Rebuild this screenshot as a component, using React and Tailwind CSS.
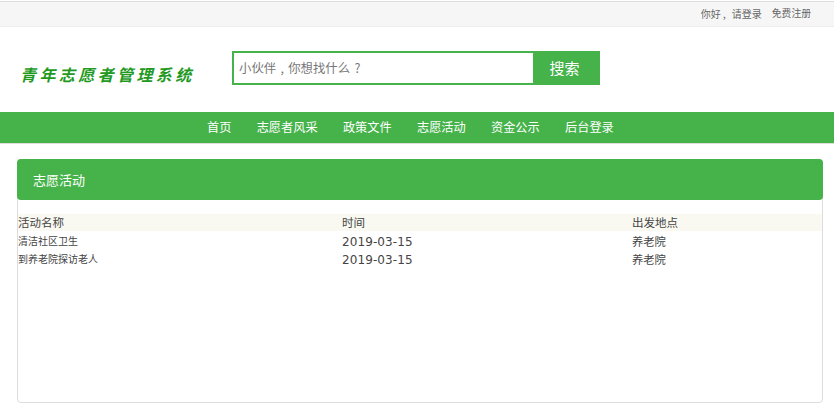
const nav = ["首页", "志愿者风采", "政策文件", "志愿活动", "资金公示", "后台登录"];
const rows = [
  ["清洁社区卫生", "2019-03-15", "养老院"],
  ["到养老院探访老人", "2019-03-15", "养老院"],
];

export default function App() {
  return (
    <div className="w-[834px] h-[411px] overflow-hidden bg-white font-['Noto_Sans_CJK_SC',sans-serif] text-[#444]">
      <div className="h-[26px] mt-[1px] border-t border-t-[#ddd] border-b border-b-[#eee] bg-[#f6f6f6] flex items-center justify-end pr-[23px] text-[10px] leading-none text-[#666]">
        <span>你好 ,</span>
        <span className="ml-[6px]">请登录</span>
        <span className="ml-[10px] text-[9.8px]">免费注册</span>
      </div>
      <div className="h-[85px] flex items-start">
        <div className="w-[232px] pl-[20px] pt-[36px] text-[16px] leading-[22px] italic font-bold text-[#1f9a1f] tracking-[3.4px] whitespace-nowrap">青年志愿者管理系统</div>
        <div className="mt-[24px] flex h-[34px] w-[368px] bg-[#45b24a]">
          <div className="m-[2px] mr-0 w-[299px] bg-white pl-[5px] text-[12.4px] [word-spacing:1.5px] leading-[30px] text-[#777] whitespace-nowrap">小伙伴 , 你想找什么 ?</div>
          <div className="flex-1 pr-[4px] text-center text-[15px] leading-[34px] text-white">搜索</div>
        </div>
      </div>
      <div className="h-[32px] bg-[#45b24a] border-b border-b-[#ddd] flex items-center pl-[207px] gap-[25.3px] text-[12.2px] leading-none text-white">
        {nav.map((n) => <span key={n}>{n}</span>)}
      </div>
      <div className="mx-[17px] mt-[15px] h-[244px] w-[806px] rounded-[4px] border border-[#ddd]">
        <div className="h-[41px] -m-[1px] mb-0 rounded-[4px] bg-[#45b24a] pl-[16px] text-[13px] leading-[41px] text-white">志愿活动</div>
        <div className="mt-[14px]">
          <div className="grid grid-cols-[324px_290px_1fr] h-[17px] bg-[#f9f9f1] text-[11.5px] leading-[17px]">
            <span>活动名称</span><span>时间</span><span>出发地点</span>
          </div>
          {rows.map((r) => (
            <div key={r[0]} className="grid grid-cols-[324px_290px_1fr] h-[18px] text-[10px] leading-[20px]">
              <span>{r[0]}</span>
              <span className="font-['DejaVu_Sans',sans-serif] text-[12px] leading-[22px] tracking-[0.1px]">{r[1]}</span>
              <span className="text-[11.3px]">{r[2]}</span>
            </div>
          ))}
        </div>
      </div>
    </div>
  );
}
